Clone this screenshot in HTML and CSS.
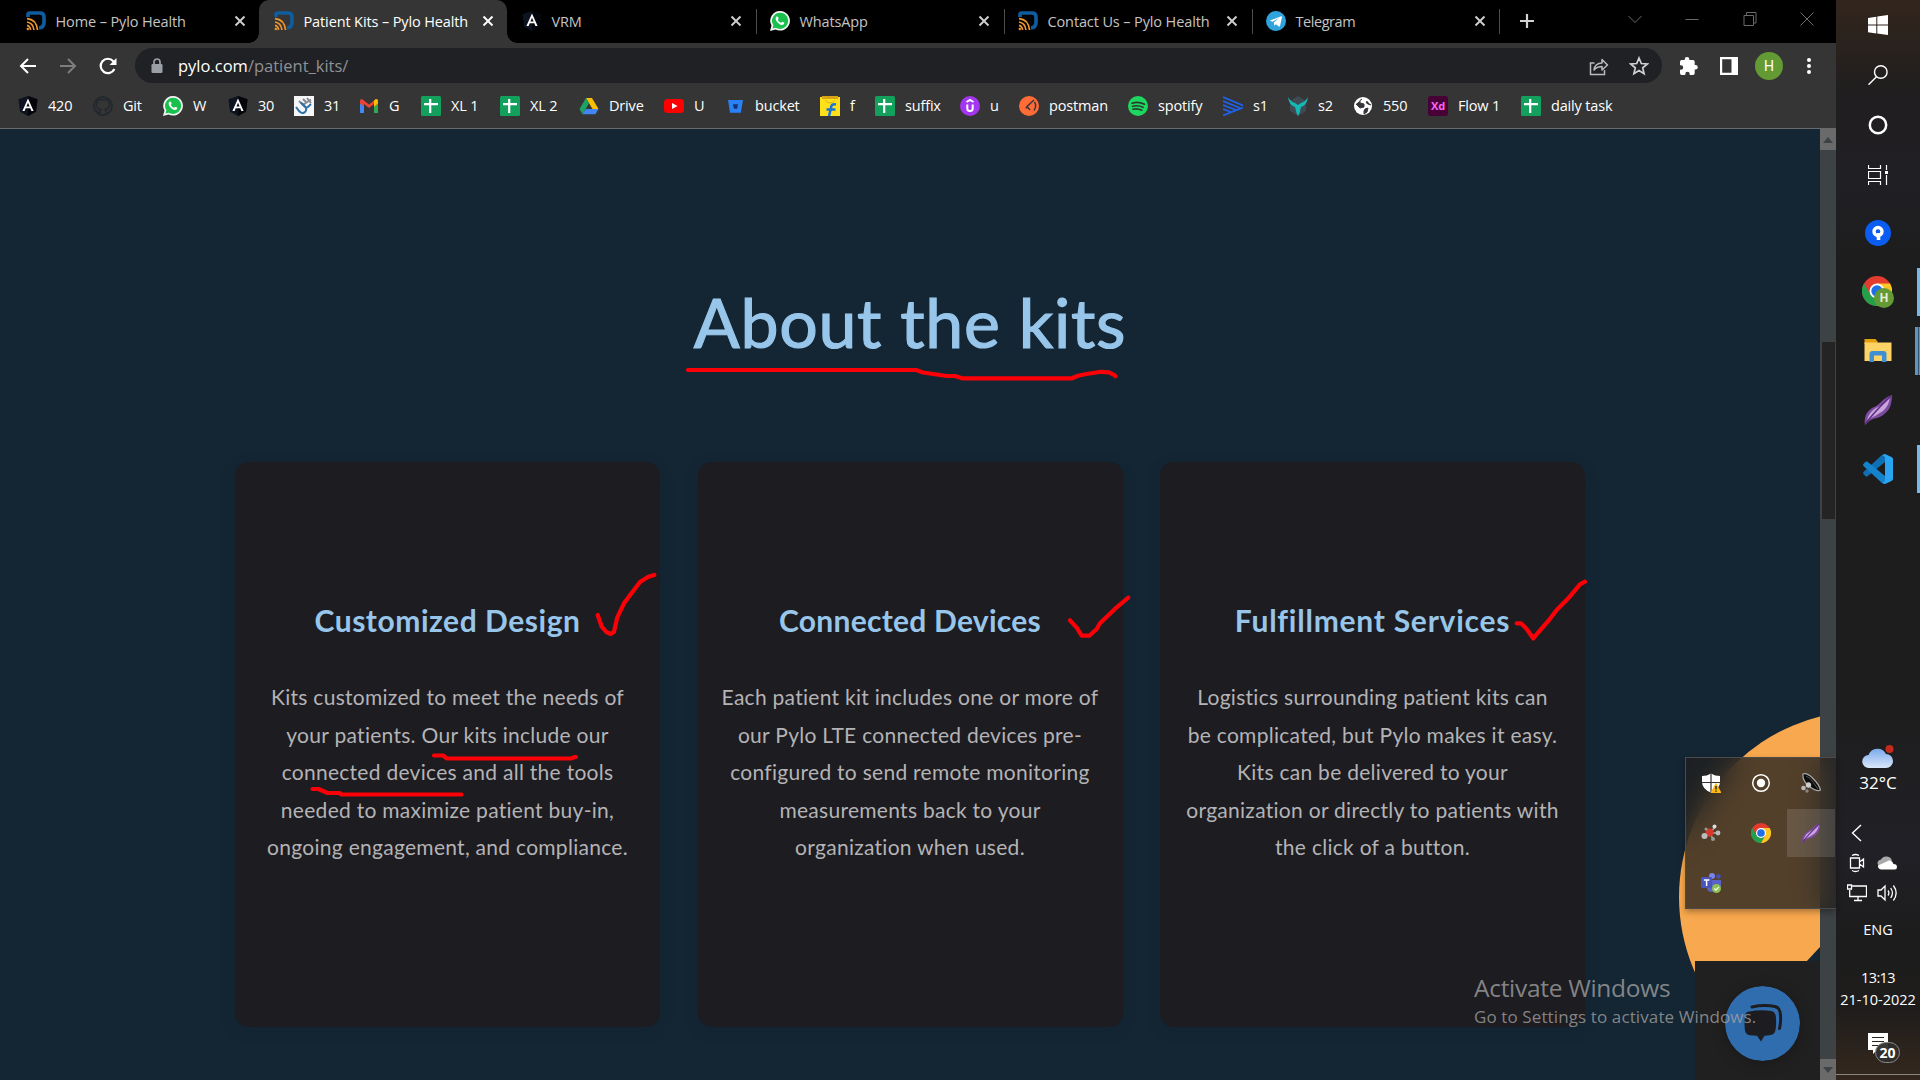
FILE: index.html
```html
<!DOCTYPE html>
<html lang="en">
<head>
<meta charset="utf-8">
<title>Patient Kits – Pylo Health</title>
<link rel="stylesheet" href="styles.css">
</head>
<body>
<svg class="defs" aria-hidden="true">
  <symbol id="pylo" viewBox="0 0 20 20">
    <path d="M2 6V3.500Q2 2 3.800 2H14q4 0 4 4v5.500q0 5-5 5.500" fill="none" stroke="#0f5c9e" stroke-width="3.600"/>
    <g fill="none" stroke="#f0962e" stroke-width="1.700"><path d="M1 7.600q9.500.8 10.500 11.400M1 11q6 .8 7 8M1 14.400q3 .6 3.600 4.600"/></g>
    <circle cx="1.800" cy="18" r="1.200" fill="#f0962e"/>
  </symbol>
  <symbol id="angular" viewBox="0 0 20 20">
    <path d="M10 0l9.500 3.300-1.500 12.400L10 20l-8-4.300L.5 3.300z" fill="#0d1320"/><path d="M10 0l9.500 3.300-1.500 12.400L10 20z" fill="#05060c"/>
    <path d="M10 2.600L4.400 15h2.200l1.100-2.800h4.600l1.100 2.800h2.200zm0 4.200l1.600 3.700H8.400z" fill="#fff"/>
  </symbol>
  <symbol id="whatsapp" viewBox="0 0 20 20">
    <path d="M10.200 0a9.800 9.800 0 1 1-4.600 18.500L0 20l1.500-5.400A9.800 9.800 0 0 1 10.200 0z" fill="#f4f4f4"/>
    <path d="M10.200 1.700a8.100 8.100 0 1 1-4.400 15L2.500 17.500l.9-3.200a8.100 8.100 0 0 1 6.800-12.600z" fill="#18c14c"/>
    <path d="M7.200 5.400c.5 0 .6.200.8.700l.6 1.500c.1.300-.7 1.200-.7 1.400.7 1.400 1.700 2.200 3 2.800.4.100 1-1.100 1.300-1.100l1.900.9c.4.200 0 1.600-.6 2-2.300 1.300-5-.8-6.400-2.500C5.500 9.200 5.200 7 6.300 5.800c.2-.3.600-.4.900-.4z" fill="#fff"/>
  </symbol>
  <symbol id="sheet" viewBox="0 0 20 20">
    <rect width="20" height="20" rx="1.500" fill="#12a05c"/><path d="M9.200 3v14M3 8.200h14" stroke="#fff" stroke-width="2.200"/>
  </symbol>
  <symbol id="close" viewBox="0 0 12 12"><path d="M1.500 1.500l9 9M10.500 1.500l-9 9" stroke="currentColor" stroke-width="1.900"/></symbol>
  <symbol id="chrome" viewBox="0 0 30 30">
    <circle cx="15" cy="15" r="15" fill="#e33b2e"/>
    <path d="M2 7.500A15 15 0 0 0 15 30l6.500-11.200L8.500 18.800z" fill="#22a04b"/>
    <path d="M28 7.500H15l6.500 11.300L15 30A15 15 0 0 0 28 7.500z" fill="#fcc622"/>
    <circle cx="15" cy="15" r="7.500" fill="#fff"/><circle cx="15" cy="15" r="5.700" fill="#1f6fe8"/>
  </symbol>
  <symbol id="feather" viewBox="0 0 28 30">
    <path d="M1 30Q-1 19 8 13 15 10 19 5 24 1 28 0q0 9-3 14-5 7-12 9-7 1-12 7z" fill="#7c4a9e"/>
    <path d="M3 25q2-8 9-12 8-3 14-11-1 9-7 14-7 5-16 9z" fill="#c9a4dd"/>
    <path d="M1.500 29Q9 18 27 1" fill="none" stroke="#5d2c80" stroke-width="1.600"/>
  </symbol>
</svg>

<div class="desktop">
  <main class="browser">
    <div class="tabs">
      <div class="tab"><svg class="fav"><use href="#pylo"/></svg><span>Home – Pylo Health</span><svg class="x"><use href="#close"/></svg></div>
      <div class="tab active"><svg class="fav"><use href="#pylo"/></svg><span>Patient Kits – Pylo Health</span><svg class="x"><use href="#close"/></svg></div>
      <div class="tab"><svg class="fav"><use href="#angular"/></svg><span>VRM</span><svg class="x"><use href="#close"/></svg></div>
      <div class="tab sep"><svg class="fav"><use href="#whatsapp"/></svg><span>WhatsApp</span><svg class="x"><use href="#close"/></svg></div>
      <div class="tab sep"><svg class="fav"><use href="#pylo"/></svg><span>Contact Us – Pylo Health</span><svg class="x"><use href="#close"/></svg></div>
      <div class="tab sep last"><svg class="fav" viewBox="0 0 20 20"><circle cx="10" cy="10" r="10" fill="#2fa4dc"/><path d="M3.800 9.700L15.300 5.200q.9-.1.700.9l-2 9q-.3.900-1.100.4l-3-2.200-1.600 1.500-.5-3.300 5.200-4.400-6.500 3.700z" fill="#fff"/></svg><span>Telegram</span><svg class="x"><use href="#close"/></svg></div>
      <div class="newtab"><svg width="16" height="16" viewBox="0 0 16 16"><path d="M8 1v14M1 8h14" stroke="#d2d2d2" stroke-width="2.200"/></svg></div>
      <div class="winctl">
        <svg viewBox="0 0 14 14"><path d="M.5 4L7 10.500 13.500 4" /></svg>
        <svg viewBox="0 0 14 14"><path d="M.5 7.500h13"/></svg>
        <svg viewBox="0 0 14 14"><path d="M1 3.500h9.500V13.500H1zM3.500 3V.5H13V11h-2.500"/></svg>
        <svg viewBox="0 0 14 14"><path d="M.5.5l13 13M13.500.5l-13 13"/></svg>
      </div>
    </div>

    <div class="toolbar">
      <div class="nav">
        <svg viewBox="0 0 18 18"><path d="M17 9H2M9 2L2 9l7 7" fill="none" stroke="#fff" stroke-width="2"/></svg>
        <svg viewBox="0 0 18 18"><path d="M1 9h15M9 2l7 7-7 7" fill="none" stroke="#7d7d7d" stroke-width="2"/></svg>
        <svg viewBox="0 0 18 18"><path d="M15.400 12A7.200 7.200 0 1 1 14.300 4.200L16 6" fill="none" stroke="#fff" stroke-width="2.200"/><path d="M17.500 1v7h-7z" fill="#fff"/></svg>
      </div>
      <div class="omnibox">
        <svg class="lock" viewBox="0 0 12 16"><path d="M3 6V4a3 3 0 0 1 6 0v2" fill="none" stroke="#9aa0a6" stroke-width="1.700"/><rect x=".5" y="6" width="11" height="9" rx="1.300" fill="#9aa0a6"/></svg>
        <span class="url">pylo.com<i>/patient_kits/</i></span>
        <svg class="share" viewBox="0 0 20 20"><path d="M5.500 7H1.500v11.500H15.500V14" fill="none" stroke="#b9bbbd" stroke-width="1.500"/><path d="M5 14q1-7 8-7V3.500L18.500 9 13 14v-3.500q-5 0-8 3.500z" fill="none" stroke="#b9bbbd" stroke-width="1.500" stroke-linejoin="round"/></svg>
        <svg class="star" viewBox="0 0 20 20"><path d="M10 2l2.300 5.500 6 .5-4.600 3.900 1.400 5.800L10 14.600l-5.100 3.100 1.400-5.800L1.700 8l6-.5z" fill="none" stroke="#d0d1d2" stroke-width="1.700"/></svg>
      </div>
      <div class="exts">
        <svg viewBox="0 0 20 20"><path d="M8 1a2.300 2.300 0 0 1 2.300 2.300V4H14q1.700 0 1.700 1.700V9h.8a2.300 2.300 0 0 1 0 4.600h-.8v3.700Q15.700 19 14 19h-3.300v-1a2.200 2.200 0 0 0-4.400 0v1H2.700Q1 19 1 17.300v-3.600h1a2.200 2.200 0 0 0 0-4.400H1V5.700Q1 4 2.700 4h3v-.7A2.300 2.300 0 0 1 8 1z" fill="#fff"/></svg>
        <svg viewBox="0 0 20 20"><path d="M1 1h18v18H1zm2.200 2.200v13.600h9.300V3.200z" fill="#fff" fill-rule="evenodd"/></svg>
        <span class="avatar">H</span>
        <svg viewBox="0 0 20 20"><g fill="#fff"><circle cx="10" cy="4" r="2"/><circle cx="10" cy="10" r="2"/><circle cx="10" cy="16" r="2"/></g></svg>
      </div>
    </div>

    <div class="bookmarks">
      <a><svg><use href="#angular"/></svg>420</a>
      <a><svg viewBox="0 0 20 20"><path d="M7 19.500v-3c-3 .6-3.600-1.200-4-2.200M13 19.500v-4c0-1-.2-1.500-.8-2 2.600-.3 4.300-1.600 4.300-4.700 0-1.300-.4-2.200-1.200-3 .3-.9.200-1.800-.1-2.700-1 0-1.900.4-2.800 1a9 9 0 0 0-4.800 0c-.9-.6-1.800-1-2.800-1-.3.900-.4 1.800-.1 2.700-.8.800-1.200 1.700-1.200 3 0 3.100 1.700 4.400 4.300 4.700-.5.400-.8 1-.8 2" fill="none" stroke="#23292e" stroke-width="1.600"/><circle cx="10" cy="10" r="9" fill="none" stroke="#23292e" stroke-width="2"/></svg>Git</a>
      <a><svg><use href="#whatsapp"/></svg>W</a>
      <a><svg><use href="#angular"/></svg>30</a>
      <a><svg viewBox="0 0 20 20"><rect width="20" height="20" fill="#f5f6f7"/><g fill="none" stroke-width="2"><path d="M5 5l6 6M9 3l4 4M13 2l4 5M8 9.500l9-6" stroke="#868b90"/><path d="M2 11l3.500 4.500q3 3 5.500.5t0-5.500L7 6.500M11 12l3-1 3-3" stroke="#2b73a8"/></g></svg>31</a>
      <a><svg viewBox="0 0 20 20"><path d="M1 4.500V17h4V8z" fill="#4285f4"/><path d="M19 4.500V17h-4V8z" fill="#34a853"/><path d="M1 5q0-2 2-2l7 5.500L17 3q2 0 2 2v2.500l-4 3.200V8l-5 4-5-4v2.700L1 7.500z" fill="#ea4335"/><path d="M15 4.500L17 3q2 .2 2 2v2.500l-4 3.200z" fill="#fbbc04"/></svg>G</a>
      <a><svg><use href="#sheet"/></svg>XL 1</a>
      <a><svg><use href="#sheet"/></svg>XL 2</a>
      <a><svg viewBox="0 0 20 20"><path d="M7 2h6l6.500 11h-6z" fill="#fbbc04"/><path d="M7 2l3 5.200L3.600 18.300.5 13z" fill="#1ea362"/><path d="M6.800 13h12.700l-3.100 5.300H3.600z" fill="#4285f4"/></svg>Drive</a>
      <a><svg viewBox="0 0 20 20"><rect y="3" width="20" height="14" rx="3.500" fill="#f00"/><path d="M8 7l5.500 3L8 13z" fill="#fff"/></svg>U</a>
      <a><svg viewBox="0 0 20 20"><path d="M3 4h15l-2.200 12.700H5z" fill="#2a80f5"/><path d="M8 8.200h5l-.8 4.600H8.800z" fill="#12336e"/></svg>bucket</a>
      <a><svg viewBox="0 0 20 20"><path d="M0 1h20v19H0z" fill="#ffe11b"/><path d="M2 0h16v3H2z" fill="#d9a514"/><path d="M5 4q5 6 10 0" fill="none" stroke="#d8b512"/><path d="M16 8.500q-5-1-5 3.500L9 20M6.500 13.500h9" fill="none" stroke="#1a74d6" stroke-width="2.600"/></svg>f</a>
      <a><svg><use href="#sheet"/></svg>suffix</a>
      <a><svg viewBox="0 0 20 20"><circle cx="10" cy="10" r="10" fill="#a435f0"/><path d="M6.500 6L10 4l3.500 2M7.300 8.500v4q0 2.500 2.700 2.500t2.700-2.500v-4" fill="none" stroke="#fff" stroke-width="2"/></svg>u</a>
      <a><svg viewBox="0 0 20 20"><circle cx="10" cy="10" r="10" fill="#ff6c37"/><path d="M15 4L8 10.500l-1 2M8 10.500l3 3.500M15.500 6q2.500 4-.5 8.500" fill="none" stroke="#3a3633" stroke-width="1.500"/></svg>postman</a>
      <a><svg viewBox="0 0 20 20"><circle cx="10" cy="10" r="10" fill="#1ed760"/><path d="M4 7.200q6.500-2 12.500 1M4.500 10.300q5.500-1.500 10.500 1M5 13.200q4.500-1.200 8.800 1" fill="none" stroke="#2a3a2e" stroke-width="1.700" stroke-linecap="round"/></svg>spotify</a>
      <a><svg viewBox="0 0 20 20"><path d="M0 1l20 8.500M0 5l17 7M0 9l13 5M0 13l8 3M20 11.500L0 19.500" stroke="#1e62f0" stroke-width="1.700"/></svg>s1</a>
      <a><svg viewBox="0 0 20 20"><path d="M10 0l8 5v10l-8 5-8-5V5z" fill="#3f4a52"/><path d="M0 1q3 5 7 6l3 2 3-2q4-1 7-6-1 8-7 10l-1.500 6L10 20l-1.500-3L7 11Q1 9 0 1z" fill="#14b8b4"/></svg>s2</a>
      <a><svg viewBox="0 0 20 20"><circle cx="10" cy="10" r="9" fill="#fff"/><path d="M9 3q-3 1-2 4l4 1v3l-4 1-4-4M14 5q-2 2 1 3l3 1M12 13l3-1-1 4-3 2v-3z" fill="#35363a" stroke="#35363a"/></svg>550</a>
      <a><svg viewBox="0 0 20 20"><rect width="20" height="20" rx="3" fill="#470137"/><text x="10" y="14" text-anchor="middle" class="xd">Xd</text></svg>Flow 1</a>
      <a><svg><use href="#sheet"/></svg>daily task</a>
    </div>

    <div class="viewport">
      <section class="page">
        <h1>About the kits</h1>
        <div class="cards">
          <article><h3>Customized Design</h3><p>Kits customized to meet the needs of<br>your patients. Our kits include our<br>connected devices and all the tools<br>needed to maximize patient buy-in,<br>ongoing engagement, and compliance.</p></article>
          <article><h3>Connected Devices</h3><p>Each patient kit includes one or more of<br>our Pylo LTE connected devices pre-<br>configured to send remote monitoring<br>measurements back to your<br>organization when used.</p></article>
          <article><h3>Fulfillment Services</h3><p>Logistics surrounding patient kits can<br>be complicated, but Pylo makes it easy.<br>Kits can be delivered to your<br>organization or directly to patients with<br>the click of a button.</p></article>
        </div>
        <div class="sun"></div>
        <div class="chat">
          <svg width="75" height="75" viewBox="0 0 75 75"><circle cx="37.500" cy="37.500" r="37.500" fill="#2f6dae"/><path d="M27 21q12-2.500 23-.5 4 1 5 5 1.500 9-.5 17" fill="none" stroke="#1d1c21" stroke-width="3" stroke-linecap="round"/><path d="M24 25.500q12-2 22-.5 4 .5 4.800 5 .8 8-.3 14-.8 4.500-5 5-3 .6-6 .7L36 55.500l-4-5.700-7-.6q-4-.5-5-4.500-1-7 0-15 .6-3.700 4-4.200z" fill="#1d1c21"/></svg>
        </div>
      </section>
      <div class="scroll"><b class="up"></b><i></i><b class="down"></b></div>
    </div>
  </main>

  <aside class="taskbar">
    <div class="pins">
      <svg class="w20" viewBox="0 0 20 20"><path d="M0 2.900L8.300 1.700V9.500H0zM9.300 1.500L20 0v9.500H9.300zM0 10.500h8.300v7.900L0 17.200zM9.300 10.500H20V20L9.300 18.500z" fill="#fff"/></svg>
      <svg class="w20" viewBox="0 0 20 20"><circle cx="12.800" cy="7" r="6.300" fill="none" stroke="#fff" stroke-width="1.400"/><path d="M8.500 11.700L.5 19.700" stroke="#fff" stroke-width="1.500"/></svg>
      <svg class="w20" viewBox="0 0 20 20"><circle cx="10" cy="10" r="8.200" fill="none" stroke="#fff" stroke-width="2.500"/></svg>
      <svg class="w20" viewBox="0 0 20 20"><path d="M.5 0v3.500h12V0M.5 20v-3.500h12V20M.5 6.500h12v7H.5zM18.500 0v5M18.500 10v10" fill="none" stroke="#fff" stroke-width="1.200"/><path d="M17 6h3v3h-3z" fill="#fff"/></svg>
    </div>
    <div class="apps">
      <div><svg viewBox="0 0 30 30"><circle cx="15" cy="15" r="13" fill="#0b5cf0"/><circle cx="15" cy="13.500" r="4" fill="none" stroke="#fff" stroke-width="3.400"/><path d="M15.500 15v7" stroke="#fff" stroke-width="3.600"/></svg></div>
      <div class="run"><svg class="wide" viewBox="0 0 32 32"><use href="#chrome" x="0" y="0" width="30" height="30"/><circle cx="22" cy="22" r="10" fill="#639a33"/><text x="22" y="26.200" text-anchor="middle" class="hb">H</text></svg></div>
      <div class="run multi"><svg viewBox="0 0 30 30"><path d="M1.500 3h11l2 2.500V8h-13z" fill="#e3a00d"/><path d="M1.500 6.500h27V25h-27z" fill="#fdd365"/><path d="M6.500 26v-8q0-3 3-3h11q3 0 3 3v8h-4.500v-6.500h-8V26z" fill="#3f8fd2"/></svg></div>
      <div><svg viewBox="0 0 30 30"><use href="#feather" x="1" y="0" width="28" height="30"/></svg></div>
      <div class="run"><svg viewBox="0 0 30 30"><path d="M0 19.500l2.500 2.700q1 .6 2 0L22 8V1L19.500.5 1 17.500q-1 1 -1 2z" fill="#0f6fb5"/><path d="M0 10.500l2.500-2.700q1-.6 2 0L22 22v7l-2.500.5L1 12.500q-1-1-1-2z" fill="#1583cc"/><path d="M22 0l6.500 3Q30 4 30 5v20q0 1-1.500 2L22 30q-1.200 0-2.500-1.200L22 27V3l-2.500-1.800Q20.800 0 22 0z" fill="#29a5f2"/></svg></div>
    </div>
    <div class="weather">
      <svg width="32" height="24" viewBox="0 0 32 24"><defs><linearGradient id="cl" x1="0" y1="0" x2="0" y2="1"><stop offset="0" stop-color="#7aa9ec"/><stop offset="1" stop-color="#dbe8fa"/></linearGradient></defs><path d="M7 23a6.500 6.500 0 0 1-.5-13A9.500 9.500 0 0 1 24 9a7 7 0 0 1 0 14z" fill="url(#cl)"/><circle cx="27.500" cy="4" r="4" fill="#c42b1c"/></svg>
      <span>32°C</span>
    </div>
    <div class="sys">
      <svg viewBox="0 0 20 20"><path d="M14 2L5.500 10l8.500 8" fill="none" stroke="#fff" stroke-width="1.400"/></svg><svg></svg>
      <svg viewBox="0 0 20 20"><path d="M3.500 5h9v10h-9zM12.500 9l4-3v8l-4-3M5 2.500q3.500-2 7 0M5 17.500q3.500 2 7 0" fill="none" stroke="#fff" stroke-width="1.300"/></svg>
      <svg viewBox="0 0 20 20"><path d="M5 13Q0 13 .5 9.500 1 7 4 6.500 6 3 10 3.500q4 .5 5 4z" fill="#a9a9a9"/><path d="M4 16.500q-3.500-1-3-4L10 8.500q2-2 5 0 1 1 1.500 2.500 3.500 0 3.500 3t-3 2.500z" fill="#fff"/></svg>
      <svg viewBox="0 0 20 20"><path d="M4 3h15.500v10.500H2.700V7M11 13.500V17M7 17.500h8M.5 2h4v4h-4z" fill="none" stroke="#fff" stroke-width="1.300"/></svg>
      <svg viewBox="0 0 20 20"><path d="M1 7h3l4-4v14l-4-4H1z M11 7.500q1.800 2.500 0 5M13.700 5q3.500 5 0 10M16.400 2.500q5.500 7.500 0 15" fill="none" stroke="#fff" stroke-width="1.300"/></svg>
    </div>
    <div class="lang">ENG</div>
    <div class="clock"><span class="time">13:13</span><span>21-10-2022</span></div>
    <div class="notes"><svg width="20" height="21" viewBox="0 0 20 21"><path d="M0 0h20v17H9l-4 4v-4H0z" fill="#fff"/><path d="M4 4.500h12M4 8.500h12M4 12.500h7" stroke="#2a2522" stroke-width="1.200"/></svg><b>20</b></div>
  </aside>

  <div class="tray">
    <svg viewBox="0 0 20 20"><path d="M10 .5q4 2.500 9 2.500v6q0 7-9 10.500Q1 16 1 9V3q5 0 9-2.500z" fill="#fff"/><path d="M10 0v20M1 9.500h18" stroke="#333" stroke-width="1.200"/><path d="M15 9.500L20.500 20h-11z" fill="#fdb813"/><path d="M15 13v3.500M15 17.500v1.300" stroke="#222" stroke-width="1.400"/></svg>
    <svg viewBox="0 0 20 20"><circle cx="10" cy="10" r="8.300" fill="none" stroke="#fff" stroke-width="1.500"/><circle cx="10" cy="10" r="4.200" fill="#fff"/></svg>
    <svg viewBox="0 0 20 20"><path d="M2 1q4-1.500 10 4.500t7.500 11.500Q16 19 9 14 1 8 2 1z" fill="#0c0c0c" stroke="#aaa" stroke-width="1.200"/><path d="M5 3q5 2 7 6l5 7" fill="none" stroke="#555"/><circle cx="7.500" cy="12" r="2.700" fill="#ccc"/><circle cx="2.500" cy="15" r="2.300" fill="#bbb"/><circle cx="6" cy="18" r="1.700" fill="#888"/></svg>
    <svg viewBox="0 0 20 20"><path d="M9 10l5-6M9 10L3 13M9 10l8 0M9 10l3 6" stroke="#aaa" stroke-width="1.600"/><circle cx="8.500" cy="9.500" r="4" fill="#d8382c"/><circle cx="3.500" cy="13" r="3" fill="#bbb"/><circle cx="17" cy="10" r="2.400" fill="#bbb"/><circle cx="12" cy="16" r="2" fill="#999"/><circle cx="13.500" cy="3.500" r="2" fill="#ddd"/><circle cx="5" cy="6" r="1.500" fill="#999"/></svg>
    <svg viewBox="0 0 30 30"><use href="#chrome"/></svg>
    <span class="hot"><svg viewBox="0 0 28 30"><use href="#feather"/></svg></span>
    <svg viewBox="0 0 20 20"><circle cx="11" cy="3" r="3" fill="#7b83eb"/><circle cx="17.500" cy="3.500" r="2.200" fill="#4350bf"/><path d="M11 7h9v6q-1 4-5 4l-4 2q-4 0-5-3z" fill="#5a62c8"/><rect y="4" width="11" height="11" rx="1" fill="#4b53bc"/><path d="M2.800 7h5.600M5.600 7v6" stroke="#fff" stroke-width="1.500"/><circle cx="15.500" cy="15.500" r="4.500" fill="#8cc152"/><path d="M13.300 15.500l1.700 1.700 2.800-3" fill="none" stroke="#fff" stroke-width="1.200"/></svg>
  </div>

  <div class="activate"><strong>Activate Windows</strong><span>Go to Settings to activate Windows.</span></div>

  <svg class="ink" viewBox="0 0 1920 1080">
    <path d="M688 370H916l7 2.500 23.500 3.500h8.500l7 2.300h110l6-2.500 7-1.500 16-2.500 8 .5 5 2.500 1.500 1.500"/>
    <path d="M434 755.500h9l4 3H571l4-1.500h1"/>
    <path d="M312.500 789h6l9 4h12l2 1.500H461.500"/>
    <path d="M597.700 615L601.700 626.700 606.700 632.300 610.700 634 614 631.700 617.300 617.300 624 603.300 630.700 594.300 640 582 648.300 576.700 654.300 575"/>
    <path d="M1070 620.300L1076.700 627.700 1081.700 635.700H1089.300L1096.700 629 1100 623.300 1116.700 607.300 1128.300 597.700"/>
    <path d="M1516.700 623.300H1521L1526.700 629 1533.300 638.500 1538.300 632.300 1548.300 621 1556.700 610 1568.300 598.300 1580 584.300 1585 581.700"/>
  </svg>
</div>
</body>
</html>
```
FILE: styles.css
```css
* { box-sizing: border-box; }
body { margin: 0; background: #000; font-family: "Open Sans", "Noto Sans", sans-serif; overflow: hidden; }
svg { display: block; flex: none; }
.defs { position: absolute; width: 0; height: 0; }
.desktop { position: relative; display: flex; width: 1920px; height: 1080px; }

/* Browser chrome */
.browser { width: 1836px; display: flex; flex-direction: column; }
.tabs { display: flex; height: 43px; padding-left: 11px; background: #000; }
.tab { position: relative; display: flex; flex: none; align-items: center; width: 248px; height: 43px; padding: 0 13px 1px 14.500px; font-size: 14.500px; letter-spacing: -.12px; color: #c4c4c4; white-space: nowrap; }
.tab span { flex: 1; margin-left: 10px; }
.tab .fav { width: 20px; height: 20px; }
.tab .x { width: 12px; height: 12px; color: #d0d0d0; }
.tab.sep::before { content: ""; position: absolute; left: 1px; top: 9px; width: 1px; height: 25px; background: #4c4c4c; }
.tab.last { letter-spacing: -.45px; }
.tab.last::after { content: ""; position: absolute; right: -1px; top: 9px; width: 1px; height: 25px; background: #4c4c4c; }
.tab.active { background: #353535; color: #fff; border-radius: 10px 10px 0 0; }
.tab.active .x { color: #fff; }
.tab.active::before, .tab.active::after { content: ""; position: absolute; bottom: 0; width: 10px; height: 10px; }
.tab.active::before { left: -10px; background: radial-gradient(circle at 0 0, #000 9.500px, #353535 10px); }
.tab.active::after { right: -10px; background: radial-gradient(circle at 100% 0, #000 9.500px, #353535 10px); }
.newtab { padding: 13px 0 0 20px; }
.winctl { display: flex; gap: 43.500px; margin-left: auto; padding: 12px 22px 0 0; }
.winctl svg { width: 14px; height: 14px; fill: none; stroke: #6b6b6b; stroke-width: 1; }

.toolbar { display: flex; align-items: center; height: 45px; background: #353535; }
.nav { display: flex; flex: none; gap: 22px; width: 135px; padding-left: 18.500px; }
.nav svg { width: 18px; height: 18px; }
.omnibox { display: flex; flex: none; align-items: center; width: 1527px; height: 35px; padding: 0 13px 0 16px; border-radius: 18px; background: #202124; }
.lock { width: 12px; height: 16px; }
.url { flex: 1; margin-left: 15px; color: #fff; font-size: 16.500px; line-height: 33px; }
.url i { font-style: normal; color: #8f9194; }
.share, .star { width: 20px; height: 20px; }
.star { margin-left: 20px; }
.exts { display: flex; align-items: center; padding-left: 17px; }
.exts svg { width: 20px; height: 20px; margin-right: 20px; }
.exts .avatar { flex: none; margin: 0 16px 0 -4px; width: 28px; height: 28px; border-radius: 50%; background: #639a33; color: #fff; font: 14px/28px Roboto, sans-serif; text-align: center; }
.exts svg:last-child { margin-right: 0; }

.bookmarks { display: grid; grid-template-columns: 75px 70px 65px 66px 65px 62px 79px 79px 85px 61px 95px 55px 85px 59px 109px 95px 65px 65px 75px 93px 120px; height: 41px; padding: 0 0 4px 18px; align-items: center; background: #353535; border-bottom: 1px solid #6a6a6a; color: #fff; font-size: 14.500px; letter-spacing: -.17px; white-space: nowrap; }
.bookmarks a { display: flex; align-items: center; gap: 10px; line-height: 20px; }
.bookmarks svg { width: 20px; height: 20px; }
.xd { font: bold 11px "Open Sans", sans-serif; fill: #ff61f6; }

/* Web page */
.viewport { flex: 1; display: flex; }
.page { position: relative; width: 1820px; height: 951px; overflow: hidden; background: #142533; }
h1 { margin: 0; padding-top: 151px; text-align: center; font: 400 68px/84px Lato, sans-serif; letter-spacing: .7px; color: #98c6ea; -webkit-text-stroke: 1.200px #98c6ea; }
.cards { display: flex; justify-content: space-between; width: 1350px; margin: 98px auto 0; }
article { width: 425px; height: 565px; padding-top: 136px; border-radius: 14px; background: #1d1c21; box-shadow: 0 4px 16px rgba(20, 30, 50, .12); text-align: center; }
h3 { margin: 0; font: 700 30px/44px Lato, sans-serif; letter-spacing: .54px; color: #98c6ea; }
article:nth-child(2) h3 { letter-spacing: .26px; }
article:nth-child(3) h3 { letter-spacing: .75px; }
p { margin: 36px 0 0; font: 400 21px/37.500px Lato, sans-serif; letter-spacing: .28px; color: #b4b3b5; white-space: nowrap; }
.sun { position: absolute; left: 1679px; top: 582px; width: 372px; height: 372px; border-radius: 50%; background: #f8a84e; }
.sun::after { content: ""; position: absolute; left: 127px; top: 236px; width: 14px; height: 15px; background: #142533; clip-path: polygon(100% 0, 100% 100%, 0 100%); }
.chat { position: absolute; left: 1695px; top: 832px; width: 125px; height: 119px; padding: 25px 0 0 30px; background: #202020; }
.chat svg { border-radius: 50%; box-shadow: 0 2px 14px rgba(0, 0, 0, .25); }
.scroll { display: flex; flex-direction: column; width: 16px; background: #3d4245; }
.scroll b { display: flex; align-items: center; justify-content: center; height: 21px; background: #6a6a6a; }
.scroll b::after { content: ""; border: 5px solid transparent; }
.scroll .up::after { border-top: 0; border-bottom: 6px solid #3d4245; }
.scroll .down { margin-top: auto; }
.scroll .down::after { border-bottom: 0; border-top: 6px solid #3d4245; }
.scroll i { width: 13px; height: 177px; margin: 192px 0 0 2px; background: #242424; }

/* Windows taskbar */
.taskbar { display: flex; flex-direction: column; align-items: center; width: 84px; background: linear-gradient(#33261d 0, #201e1f 90px, #201f24 180px, #1d1d1d 260px, #1d1d1d 700px, #212026 850px, #1c1c1c 940px, #1f1d1c 1010px, #33271d 1074px); color: #fff; }
.taskbar::after { content: ""; width: 84px; height: 1px; margin: auto 0 5px; background: #8a8580; }
.pins { display: flex; flex-direction: column; align-items: center; gap: 30px; padding-top: 15px; }
.w20 { width: 20px; height: 20px; }
.apps { display: flex; flex-direction: column; gap: 11px; width: 84px; margin-top: 24px; }
.apps div { display: grid; place-items: center; width: 84px; height: 48px; }
.apps svg { width: 30px; height: 30px; }
.apps .wide { width: 32px; height: 32px; }
.apps .run { padding-left: 3px; border-right: 3px solid #76b9ed; }
.apps .multi { padding-left: 5px; border-right: 0; background: linear-gradient(90deg, #5f93c0 3px, #34506a 3px, #34506a 4px, #5f93c0 4px) right / 5px 100% no-repeat; padding-right: 5px; }
.hb { font: bold 12px Roboto, sans-serif; fill: #e4eedd; }
.weather { display: flex; flex-direction: column; align-items: center; margin-top: 252px; font-size: 17px; line-height: 28px; }
.sys { display: grid; grid-template-columns: 20px 20px; gap: 10px; margin: 26px 0 0 -12px; }
.sys svg { width: 20px; height: 20px; }
.lang { margin-top: 17px; font-size: 14.500px; line-height: 20px; }
.clock { display: flex; flex-direction: column; align-items: center; margin-top: 27px; font-size: 14.500px; line-height: 22px; }
.time { letter-spacing: -.6px; }
.notes { position: relative; margin-top: 22px; }
.notes b { position: absolute; left: 7px; top: 9px; width: 25px; height: 21px; border: 1px solid #8a8a8a; border-radius: 11px; background: rgba(48, 46, 45, .95); font-size: 14px; line-height: 19px; text-align: center; }

/* Overlays */
.tray { position: absolute; left: 1685px; top: 757px; width: 151px; height: 152px; display: grid; grid-template-columns: repeat(3, 50px); grid-template-rows: repeat(3, 50px); place-items: center; border: 1px solid #4c4b4a; border-right: 0; background: rgba(31, 31, 31, .765); backdrop-filter: blur(14px); box-shadow: 0 3px 6px rgba(0, 0, 0, .3); }
.tray svg { width: 20px; height: 20px; }
.hot { display: grid; place-items: center; width: 48px; height: 48px; background: rgba(255, 255, 255, .12); }
.activate { position: absolute; left: 1474px; top: 972px; display: flex; flex-direction: column; color: rgba(160, 160, 160, .8); white-space: nowrap; }
.activate strong { font-weight: 400; font-size: 24.500px; line-height: 31px; letter-spacing: -.3px; }
.activate span { font-size: 17px; line-height: 28px; letter-spacing: .11px; }
.ink { position: absolute; left: 0; top: 0; width: 1920px; height: 1080px; fill: none; stroke: #fb0007; stroke-width: 4.200; stroke-linecap: round; stroke-linejoin: round; }
```
